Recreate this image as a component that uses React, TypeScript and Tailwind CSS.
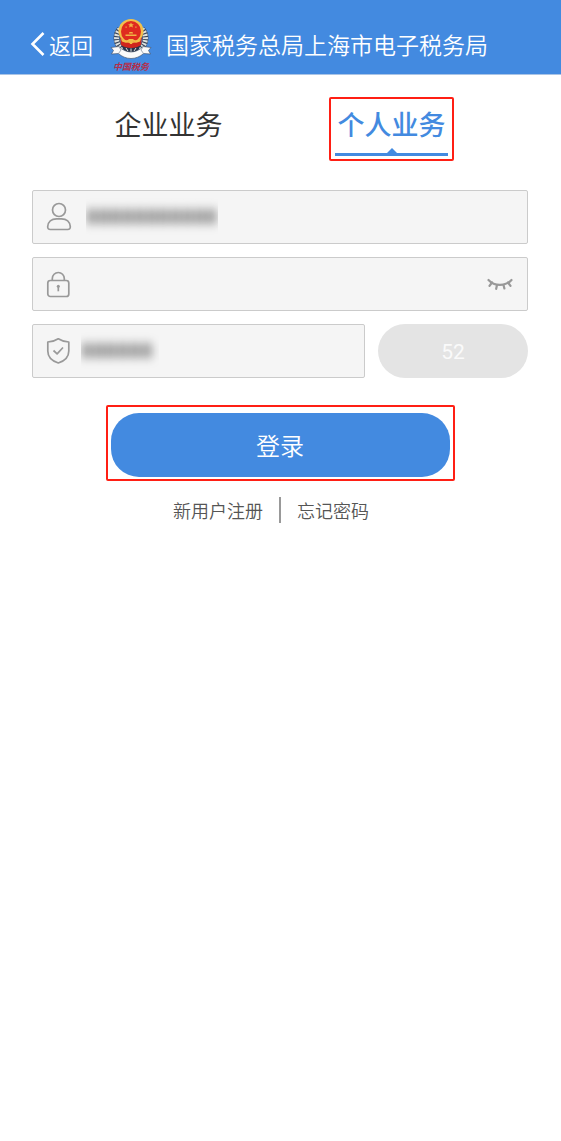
import { useState } from "react";
import type { ReactNode } from "react";

// The two kinds of account that can sign in
interface Tab {
  id: string;
  label: string;
}

const tabs: Tab[] = [
  { id: "company", label: "企业业务" },
  { id: "person", label: "个人业务" },
];

// Tax bureau emblem: wreath, red disc, gear and white ribbon
function Emblem() {
  return (
    <svg className="h-[42px] w-[42px]" viewBox="0 0 42 42" aria-hidden="true">
      {/* Wheat wreath */}
      <path d="M10 11C5 17 5 26 13 32" fill="none" stroke="#3a465a" strokeWidth="6" />
      <path d="M32 11C37 17 37 26 29 32" fill="none" stroke="#3a465a" strokeWidth="6" />
      <path d="M10 11C5 17 5 26 13 32" fill="none" stroke="#dfe3e0" strokeWidth="5" strokeDasharray="1.800 1.200" />
      <path d="M32 11C37 17 37 26 29 32" fill="none" stroke="#dfe3e0" strokeWidth="5" strokeDasharray="1.800 1.200" />
      {/* Base of the disc */}
      <path d="M10 19h22l-1 8-5 4H16l-5-4z" fill="#cf261d" />
      {/* Gold rim and red disc */}
      <ellipse cx="21" cy="13" rx="12.500" ry="12" fill="#f2c14b" />
      <ellipse cx="21" cy="13.500" rx="10" ry="10.500" fill="#df2b1f" />
      <path d="M21 4.500l.9 1.800h2l-1.500 1.200.5 2-1.900-1.100-1.900 1.100.5-2-1.500-1.200h2z" fill="#f0b545" />
      <path d="M15.500 8.500h1.200v1.200h-1.200zM25.300 8.500h1.200v1.200h-1.200zM19.500 14h3l.6 1.500h-4.200zM15.500 16.500h11V18h-11z" fill="#f0b545" />
      <path d="M11 21c4 2 7 1.500 8 0h4c1 1.500 4 2 8 0l-1 2.500c-3 1.500-5 1.500-7 0l-1 2.500h-2l-1-2.500c-2 1.500-4 1.500-7 0z" fill="#f0bf48" />
      {/* Gear under the disc */}
      <path d="M11 27c5 4 15 4 20 0l-4 7H15z" fill="#28344a" />
      <path d="M16 30l2 3M26 30l-2 3M21 30.500V34" stroke="#dfe3e0" strokeWidth="1" />
      {/* Ribbon */}
      <path
        d="M1 29.500l8-1c3 3.500 8 5.500 12 5.500s9-2 12-5.500l8 1-2.500 3 2 3.500-7-.5c-3 3-8 5-12.500 5s-9.500-2-12.500-5l-7 .5 2-3.500z"
        fill="#fafafa"
        stroke="#3c4a60"
        strokeWidth="0.600"
      />
      <path d="M9 29l2 3-2.500 3.500M33 29l-2 3 2.500 3.500" fill="none" stroke="#8b96a3" strokeWidth="0.800" />
    </svg>
  );
}

function UserIcon() {
  return (
    <svg className="h-[30px] w-[26px]" viewBox="0 0 26 30" fill="none" stroke="#999" strokeWidth="1.700">
      <circle cx="13" cy="8" r="6.500" />
      <path d="M10.500 16.800h5c5 0 8.500 3.200 8.800 7.800.1 1.900-.8 2.900-2.600 2.900H4.300c-1.800 0-2.700-1-2.600-2.900.3-4.600 3.800-7.800 8.800-7.800z" />
    </svg>
  );
}

function LockIcon() {
  return (
    <svg className="h-[30px] w-[26px]" viewBox="0 0 26 30" fill="none" stroke="#999" strokeWidth="1.700">
      <rect x="1.800" y="11.500" width="21" height="16" rx="2.500" />
      <path d="M6.300 11.500V9.500a6 6 0 0 1 12 0v2" />
      <circle cx="12.300" cy="17.300" r="1.500" fill="#999" stroke="none" />
      <path d="M12.300 17v5.300" />
    </svg>
  );
}

function ShieldIcon() {
  return (
    <svg
      className="h-[30px] w-[26px]"
      viewBox="0 0 26 30"
      fill="none"
      stroke="#999"
      strokeWidth="1.700"
      strokeLinejoin="round"
    >
      <path d="M12.300 2.800c3 2 6.500 3 10.500 3.200v9c0 6-4.300 10-10.500 12C6.100 25 1.800 21 1.800 15V6c4-.2 7.500-1.200 10.500-3.200z" />
      <path d="M7.500 14.500l3.600 3.300 5.900-6.300" />
    </svg>
  );
}

function ClosedEyeIcon() {
  return (
    <svg
      className="h-[14px] w-[28px]"
      viewBox="0 0 28 14"
      fill="none"
      stroke="#999"
      strokeWidth="2.200"
      strokeLinecap="round"
    >
      <path d="M2.500 3c6 6.500 17 6.500 23 0" />
      <path d="M6 5.500L3.500 8.800M11 8l-.8 3.800M17.500 8l.9 3.500M22 5.500l2.500 3.300" />
    </svg>
  );
}

// Red frame that points the reader to a control
function Highlight({ className }: { className: string }) {
  return <span className={`pointer-events-none absolute rounded-xs border-2 border-[#ff1f14] ${className}`} />;
}

interface FieldProps {
  id: string;
  label: string;
  icon: ReactNode;
  children: ReactNode;
}

// Grey box with an icon on the left; the icon is the label of the input
function Field({ id, label, icon, children }: FieldProps) {
  return (
    <div className="flex h-[54px] min-w-0 flex-1 items-center rounded-xs border border-[#cbcbcb] bg-[#f5f5f5] px-[13px]">
      <label htmlFor={id} aria-label={label} className="shrink-0">
        {icon}
      </label>
      {children}
    </div>
  );
}

export default function App() {
  const [active, setActive] = useState("person");

  return (
    <div className="min-h-screen bg-white font-['Noto_Sans_CJK_SC',sans-serif]">
      {/* Header */}
      <header className="flex h-[75px] items-center border-b border-[#a9c4e6] bg-[#438ae0] pt-[14px] pl-[30px] text-white">
        <a href="#back" className="flex items-center gap-1 text-[22px] leading-7 font-[350]">
          <svg
            className="h-6 w-[15px]"
            viewBox="0 0 15 24"
            fill="none"
            stroke="currentColor"
            strokeWidth="2.600"
            aria-hidden="true"
          >
            <path d="M13.500 1L2.500 12l11 11" />
          </svg>
          返回
        </a>
        <div className="ml-[17px] flex w-[42px] shrink-0 flex-col items-center pt-1">
          <Emblem />
          <span className="text-[9px] leading-[14px] font-bold whitespace-nowrap text-[#b62d48] italic">中国税务</span>
        </div>
        <h1 className="ml-[14px] text-[23px] leading-7 font-[350] whitespace-nowrap">国家税务总局上海市电子税务局</h1>
      </header>

      <main className="pr-[33px] pl-8">
        {/* Account type tabs */}
        <div role="tablist" className="flex justify-center gap-[110px] pt-[25px]">
          {tabs.map((tab) => (
            <button
              key={tab.id}
              type="button"
              role="tab"
              aria-selected={active === tab.id}
              onClick={() => setActive(tab.id)}
              className={`relative h-14 w-[113px] border-b-3 pb-[6px] text-[27px] leading-10 whitespace-nowrap ${
                active === tab.id ? "border-[#438ae0] font-medium text-[#438ae0]" : "border-transparent text-[#333]"
              }`}
            >
              {tab.label}
              {active === tab.id && (
                <>
                  <svg
                    className="absolute bottom-0 left-1/2 h-[5px] w-[10px] -translate-x-1/2"
                    viewBox="0 0 10 5"
                    fill="currentColor"
                  >
                    <path d="M5 0l5 5H0z" />
                  </svg>
                  <Highlight className="-inset-x-[6px] -top-[3px] -bottom-2" />
                </>
              )}
            </button>
          ))}
        </div>

        {/* Login form */}
        <form className="mt-[34px]" onSubmit={(e) => e.preventDefault()}>
          <div className="flex flex-col gap-[13px]">
            <div className="flex">
              <Field id="phone" label="手机号" icon={<UserIcon />}>
                <div className="ml-[14px] w-[132px] overflow-hidden py-2">
                  <input
                    id="phone"
                    type="text"
                    defaultValue="88888888888"
                    className="w-full bg-transparent font-['Roboto',sans-serif] text-[21px] leading-6 font-medium text-[#555] blur-[5px] outline-none"
                  />
                </div>
              </Field>
            </div>
            <div className="flex">
              <Field id="password" label="密码" icon={<LockIcon />}>
                <input
                  id="password"
                  type="password"
                  className="ml-3 min-w-0 flex-1 bg-transparent text-[20px] leading-6 text-[#555] outline-none"
                />
                <button type="button" aria-label="显示密码" className="shrink-0">
                  <ClosedEyeIcon />
                </button>
              </Field>
            </div>
            <div className="flex gap-[13px]">
              <Field id="code" label="验证码" icon={<ShieldIcon />}>
                <div className="ml-[9px] w-[78px] overflow-hidden py-2">
                  <input
                    id="code"
                    type="text"
                    defaultValue="888888"
                    className="w-full bg-transparent font-['Roboto',sans-serif] text-[21px] leading-6 font-medium text-[#555] blur-[5px] outline-none"
                  />
                </div>
              </Field>
              <button
                type="button"
                disabled
                className="h-[54px] w-[150px] shrink-0 rounded-full bg-[#e4e4e4] pt-1 font-['Roboto',sans-serif] text-[21px] text-[#fafafa]"
              >
                52
              </button>
            </div>
          </div>

          <div className="relative mx-auto mt-[35px] w-[339px]">
            <button
              type="submit"
              className="h-16 w-full rounded-[28px] bg-[#438ae0] text-[24px] leading-8 font-[350] text-white"
            >
              登录
            </button>
            <Highlight className="-inset-x-[5px] -top-2 -bottom-1" />
          </div>
        </form>

        {/* Links below the form */}
        <nav className="mt-5 mr-[18px] flex items-center justify-center gap-4 text-[18px] leading-6 font-[350] text-[#555]">
          <a href="#register">新用户注册</a>
          <span className="h-[26px] w-[2px] bg-[#999]" />
          <a href="#forgot">忘记密码</a>
        </nav>
      </main>
    </div>
  );
}
